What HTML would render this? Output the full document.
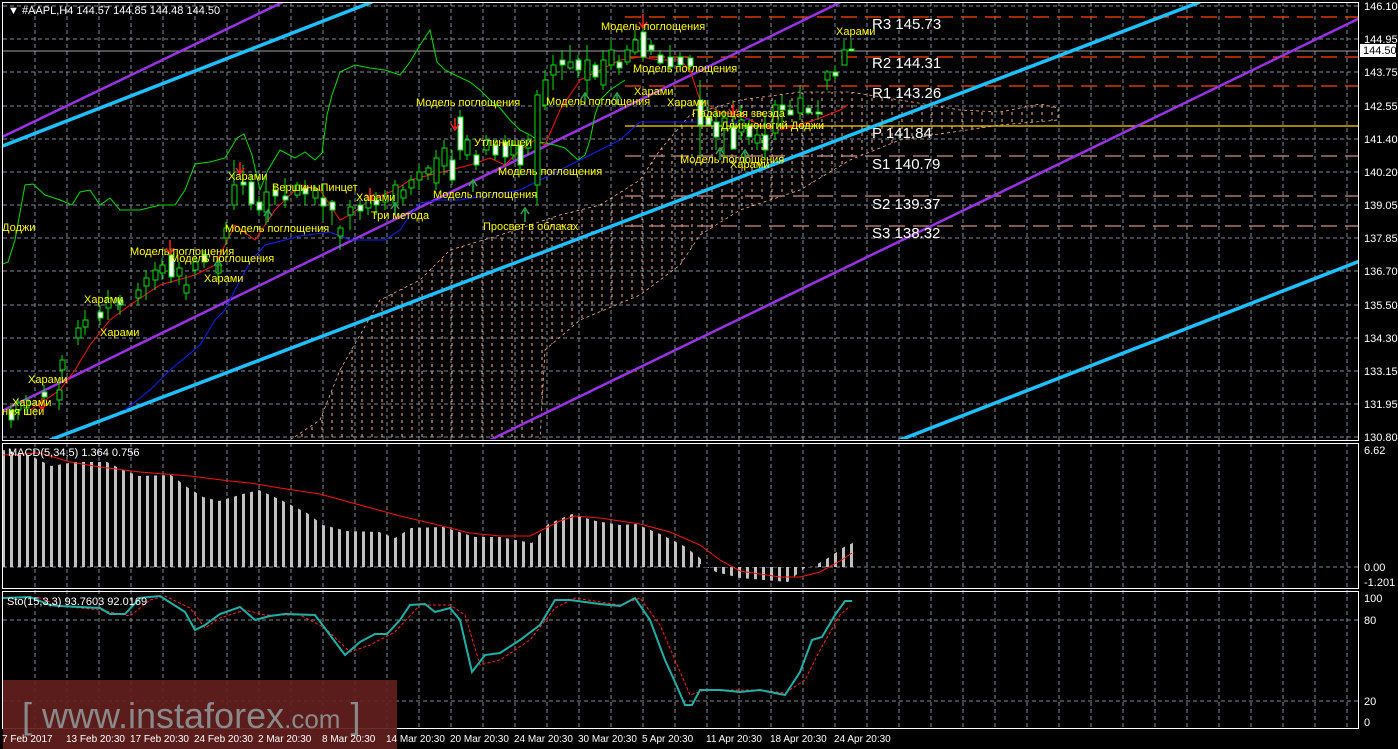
<!DOCTYPE html>
<html><head><meta charset="utf-8">
<style>
html,body{margin:0;padding:0;background:#000;width:1398px;height:749px;overflow:hidden}
svg{display:block}
text{font-family:"Liberation Sans","DejaVu Sans",sans-serif}
.ax{fill:#fff;font-size:11px}
.dt{fill:#fff;font-size:10px}
.pt{fill:#ffff00;font-size:11px;font-family:"Liberation Sans","DejaVu Sans",sans-serif}
.pv{fill:#fff;font-size:15px;font-family:"Liberation Mono","DejaVu Sans Mono",monospace}
.u{fill:#000;stroke:#00e000;stroke-width:1}
.d{fill:#fff;stroke:#00e000;stroke-width:1}
</style></head><body>
<svg width="1398" height="749" viewBox="0 0 1398 749" xmlns="http://www.w3.org/2000/svg">
<defs>
<pattern id="cl" width="10" height="7" patternUnits="userSpaceOnUse">
<line x1="2" y1="0" x2="2" y2="3" stroke="#f4b183" stroke-width="1"/>
</pattern>
<pattern id="mb" width="8" height="10" patternUnits="userSpaceOnUse" x="2">
<rect x="0" y="0" width="3" height="10" fill="#c0c0c0"/>
</pattern>
<clipPath id="mainc"><rect x="2" y="2" width="1356" height="437"/></clipPath>
</defs>
<rect width="1398" height="749" fill="#000"/>
<g stroke="#7f8a99" stroke-dasharray="4,3" stroke-width="1">
<path d="M3 6H1358M3 39H1358M3 72H1358M3 106H1358M3 139H1358M3 172H1358M3 205H1358M3 238H1358M3 271H1358M3 305H1358M3 338H1358M3 371H1358M3 404H1358M3 437H1358"/>
<path d="M35 2V728M67 2V728M99 2V728M131 2V728M163 2V728M195 2V728M227 2V728M259 2V728M291 2V728M323 2V728M355 2V728M387 2V728M419 2V728M451 2V728M483 2V728M515 2V728M547 2V728M579 2V728M611 2V728M643 2V728M675 2V728M707 2V728M739 2V728M771 2V728M803 2V728M835 2V728M867 2V728M899 2V728M931 2V728M963 2V728M995 2V728M1027 2V728M1059 2V728M1091 2V728M1123 2V728M1155 2V728M1187 2V728M1219 2V728M1251 2V728M1283 2V728M1315 2V728M1347 2V728"/>
<path d="M3 567H1358M3 620H1358M3 701H1358"/>
</g>
<g clip-path="url(#mainc)">
<polygon fill="url(#cl)" stroke="#f4b183" stroke-dasharray="3,3" stroke-width="0.8" points="290,440 320,420 340,370 380,300 420,280 450,250 500,235 560,215 600,205 640,180 660,150 690,115 740,100 800,92 850,92 900,100 960,110 1000,112 1040,104 1058,108 1058,120 1000,125 900,140 850,160 800,190 740,210 700,235 680,265 640,295 580,320 545,350 540,440"/>
<g stroke-width="1.3" stroke-dasharray="16,8">
<path d="M625 17H1358M625 57H1358M625 86H1358" stroke="#ff4500"/>
<path d="M625 156H1358M625 196H1358M625 226H1358" stroke="#d09088"/>
</g>
<path d="M625 126H1358" stroke="#ffd700" stroke-width="1.3"/>
<path d="M0 51H1358" stroke="#a0a0a0" stroke-width="1"/>
<g stroke-width="3.5" stroke="#1ec0ff" fill="none">
<line x1="0" y1="147" x2="372" y2="2"/>
<line x1="50" y1="440" x2="1200" y2="2"/>
<line x1="900" y1="440" x2="1360" y2="261"/>
</g>
<g stroke-width="2.5" stroke="#9a32e6" fill="none">
<line x1="0" y1="138" x2="283" y2="2"/>
<line x1="0" y1="412" x2="845" y2="0"/>
<line x1="490" y1="440" x2="1360" y2="18"/>
</g>
<polyline fill="none" stroke="#00e000" stroke-width="1" points="0,265 8,262 15,240 25,185 33,184 45,195 60,200 72,205 80,192 90,190 100,205 110,198 120,210 140,210 160,205 175,205 185,190 195,164 210,162 225,158 237,138 244,134 252,155 260,190 268,170 280,150 295,158 305,152 315,160 322,153 327,115 332,95 340,72 355,65 370,68 385,70 400,75 410,62 420,45 430,30 437,62 445,70 455,75 470,82 480,90 490,100 500,108 510,120 520,130 530,135 540,142 555,145 565,148 578,160 585,155 590,140 595,115 600,100 610,90 625,80"/>
<polyline fill="none" stroke="#ff1010" stroke-width="1" points="30,410 60,390 75,370 90,345 110,320 130,305 160,285 195,275 215,265 235,225 255,240 265,225 275,210 290,195 300,185 320,190 340,220 350,215 370,200 395,190 410,180 430,175 450,170 470,165 490,158 505,165 520,150 535,140 545,145 560,110 580,80 600,70 620,60 640,57 660,60 680,60 690,70 700,100 720,112 740,115 760,125 780,130 800,125 820,118 840,110 848,105"/>
<polyline fill="none" stroke="#1020ff" stroke-width="1" points="125,410 150,390 170,370 200,345 215,320 225,310 235,290 250,262 265,245 285,240 300,236 330,232 350,240 385,240 400,230 410,215 420,203 440,200 460,200 520,190 560,170 600,150 620,140 640,122 700,122 740,122 750,118"/>
<g stroke="#00e000" stroke-width="1">
<path d="M11 405V428M18 398V420M26 395V415M44 385V405M59 382V410M62 355V380M78 320V345M85 310V335M100 305V325M108 290V320M120 295V315M138 283V305M146 270V300M155 262V290M162 258V280M171 248V283M179 262V285M186 275V300M195 255V275M204 250V268M218 262V280M226 222V245M234 160V210M243 165V195M251 175V210M259 196V215M266 180V225M275 185V205M285 178V208M297 182V198M305 180V205M315 185V205M323 185V220M332 200V225M340 225V250M350 200V230M360 200V220M368 195V215M376 192V215M385 190V210M395 180V215M403 185V205M411 175V195M419 165V190M428 165V180M436 150V190M444 140V175M452 150V185M460 110V160M467 135V160M476 150V170M486 135V155M495 140V160M505 135V165M513 140V160M520 140V175M528 135V155M537 90V205M545 70V110M553 55V90M562 50V80M570 45V70M578 55V78M587 45V95M595 62V80M603 50V90M611 40V70M619 55V75M627 45V65M635 30V55M643 20V60M651 40V55M660 50V65M670 45V70M680 52V70M690 55V70M700 80V160M708 100V125M716 108V150M724 110V160M733 100V145M741 105V140M749 120V145M757 125V150M765 115V160M775 100V140M782 95V125M790 100V115M800 85V120M808 105V115M818 100V120M827 70V90M835 65V80M844 40V60M851 40V50"/>
</g>
<g>
<rect class="d" x="9" y="410" width="5" height="10"/><rect class="u" x="16" y="403" width="5" height="7"/><rect class="u" x="24" y="400" width="5" height="8"/><rect class="d" x="42" y="392" width="5" height="5"/><rect class="u" x="57" y="390" width="5" height="10"/><rect class="u" x="60" y="360" width="5" height="10"/><rect class="u" x="76" y="328" width="5" height="10"/><rect class="u" x="83" y="320" width="5" height="7"/><rect class="d" x="98" y="312" width="5" height="6"/><rect class="u" x="106" y="298" width="5" height="10"/><rect class="d" x="118" y="300" width="5" height="5"/><rect class="u" x="136" y="290" width="5" height="8"/><rect class="u" x="144" y="278" width="5" height="8"/><rect class="u" x="153" y="270" width="5" height="10"/><rect class="u" x="160" y="265" width="5" height="8"/><rect class="d" x="169" y="255" width="5" height="22"/><rect class="u" x="177" y="268" width="5" height="8"/><rect class="u" x="184" y="285" width="5" height="8"/><rect class="u" x="193" y="262" width="5" height="8"/><rect class="d" x="202" y="255" width="5" height="7"/><rect class="u" x="216" y="265" width="5" height="8"/><rect class="u" x="224" y="228" width="5" height="10"/><rect class="u" x="232" y="185" width="5" height="20"/><rect class="d" x="241" y="182" width="5" height="3"/><rect class="d" x="249" y="182" width="5" height="22"/><rect class="d" x="257" y="202" width="5" height="8"/><rect class="u" x="264" y="192" width="5" height="20"/><rect class="d" x="273" y="190" width="5" height="6"/><rect class="d" x="283" y="196" width="5" height="4"/><rect class="u" x="295" y="185" width="5" height="10"/><rect class="d" x="303" y="188" width="5" height="6"/><rect class="u" x="313" y="190" width="5" height="8"/><rect class="d" x="321" y="198" width="5" height="8"/><rect class="d" x="330" y="202" width="5" height="8"/><rect class="u" x="338" y="228" width="5" height="8"/><rect class="u" x="348" y="207" width="5" height="8"/><rect class="d" x="358" y="205" width="5" height="6"/><rect class="u" x="366" y="200" width="5" height="8"/><rect class="d" x="374" y="200" width="5" height="5"/><rect class="u" x="383" y="196" width="5" height="6"/><rect class="u" x="393" y="185" width="5" height="18"/><rect class="u" x="401" y="190" width="5" height="8"/><rect class="u" x="409" y="180" width="5" height="8"/><rect class="u" x="417" y="172" width="5" height="8"/><rect class="u" x="426" y="168" width="5" height="6"/><rect class="u" x="434" y="158" width="5" height="25"/><rect class="u" x="442" y="148" width="5" height="18"/><rect class="d" x="450" y="160" width="5" height="20"/><rect class="d" x="458" y="117" width="5" height="33"/><rect class="u" x="465" y="140" width="5" height="15"/><rect class="d" x="474" y="155" width="5" height="10"/><rect class="u" x="484" y="140" width="5" height="10"/><rect class="d" x="493" y="145" width="5" height="10"/><rect class="d" x="503" y="142" width="5" height="15"/><rect class="u" x="511" y="145" width="5" height="10"/><rect class="d" x="518" y="145" width="5" height="20"/><rect class="u" x="526" y="140" width="5" height="8"/><rect class="u" x="535" y="95" width="5" height="90"/><rect class="u" x="543" y="80" width="5" height="25"/><rect class="u" x="551" y="65" width="5" height="10"/><rect class="d" x="560" y="60" width="5" height="5"/><rect class="u" x="568" y="62" width="5" height="6"/><rect class="d" x="576" y="60" width="5" height="10"/><rect class="u" x="585" y="60" width="5" height="20"/><rect class="d" x="593" y="65" width="5" height="12"/><rect class="u" x="601" y="60" width="5" height="25"/><rect class="u" x="609" y="50" width="5" height="15"/><rect class="d" x="617" y="62" width="5" height="6"/><rect class="u" x="625" y="50" width="5" height="12"/><rect class="u" x="633" y="40" width="5" height="12"/><rect class="d" x="641" y="32" width="5" height="25"/><rect class="d" x="649" y="45" width="5" height="5"/><rect class="d" x="658" y="55" width="5" height="8"/><rect class="d" x="668" y="57" width="5" height="10"/><rect class="d" x="678" y="57" width="5" height="8"/><rect class="d" x="688" y="58" width="5" height="8"/><rect class="d" x="698" y="100" width="5" height="25"/><rect class="d" x="706" y="117" width="5" height="8"/><rect class="d" x="714" y="122" width="5" height="15"/><rect class="u" x="722" y="118" width="5" height="12"/><rect class="d" x="731" y="127" width="5" height="22"/><rect class="u" x="739" y="120" width="5" height="12"/><rect class="d" x="747" y="125" width="5" height="12"/><rect class="u" x="755" y="135" width="5" height="8"/><rect class="d" x="763" y="135" width="5" height="15"/><rect class="u" x="773" y="105" width="5" height="28"/><rect class="d" x="780" y="105" width="5" height="5"/><rect class="d" x="788" y="110" width="5" height="5"/><rect class="u" x="798" y="98" width="5" height="15"/><rect class="d" x="806" y="108" width="5" height="5"/><rect class="d" x="816" y="112" width="5" height="2"/><rect class="u" x="825" y="72" width="5" height="8"/><rect class="d" x="833" y="72" width="5" height="4"/><rect class="u" x="842" y="50" width="5" height="15"/><rect class="d" x="849" y="49" width="5" height="2"/>
</g>
<g stroke="#ff2020" stroke-width="1.5" fill="none">
<path d="M42 398V408M38 404L42 410L46 404M170 240V252M166 248L170 254L174 248M240 162V172M236 168L240 174L244 168M370 188V198M366 194L370 200L374 194M455 118V128M451 124L455 130L459 124M643 14V26M639 22L643 28L647 22M733 103V113M729 109L733 115L737 109"/>
</g>
<g stroke="#2fa84f" stroke-width="1.5" fill="none">
<path d="M268 212V222M264 216L268 210L272 216M218 262V272M214 266L218 260L222 266M118 300V310M114 304L118 298L122 304M395 205V215M391 209L395 203L399 209M473 182V192M469 186L473 180L477 186M525 210V222M521 214L525 208L529 214M585 95V105M581 99L585 93L589 99M617 95V105M613 99L617 93L621 99M720 150V160M716 154L720 148L724 154M745 152V162M741 156L745 150L749 156"/>
</g>
<g class="pt">
<text x="2" y="231">Доджи</text>
<text x="28" y="383">Харами</text>
<text x="12" y="406">Харами</text>
<text x="2" y="415">ния шеи</text>
<text x="100" y="336">Харами</text>
<text x="84" y="303">Харами</text>
<text x="130" y="255">Модель поглощения</text>
<text x="170" y="262">Модель поглощения</text>
<text x="204" y="282">Харами</text>
<text x="228" y="180">Харами</text>
<text x="225" y="232">Модель поглощения</text>
<text x="272" y="191">ВершиныПинцет</text>
<text x="356" y="201">Харами</text>
<text x="371" y="219">Три метода</text>
<text x="416" y="106">Модель поглощения</text>
<text x="433" y="198">Модель поглощения</text>
<text x="474" y="146">Утлинищеи</text>
<text x="498" y="175">Модель поглощения</text>
<text x="483" y="230">Просвет в облаках</text>
<text x="546" y="105">Модель поглощения</text>
<text x="601" y="30">Модель поглощения</text>
<text x="633" y="72">Модель поглощения</text>
<text x="634" y="95">Харами</text>
<text x="667" y="106">Харами</text>
<text x="692" y="117">Падающая звезда</text>
<text x="721" y="129">Длинноногий Доджи</text>
<text x="680" y="163">Модель поглощения</text>
<text x="730" y="168">Харами</text>
<text x="836" y="35">Харами</text>
</g>
</g>
<g class="pv">
<text x="872" y="29">R3 145.73</text>
<text x="872" y="68">R2 144.31</text>
<text x="872" y="98">R1 143.26</text>
<text x="872" y="138">P 141.84</text>
<text x="872" y="169">S1 140.79</text>
<text x="872" y="209">S2 139.37</text>
<text x="872" y="238">S3 138.32</text>
</g>
<g stroke="#fff" stroke-width="1" fill="none">
<rect x="2.5" y="2.5" width="1356" height="438"/>
<rect x="2.5" y="443.5" width="1356" height="145"/>
<rect x="2.5" y="591.5" width="1356" height="137"/>
</g>
<text x="8" y="14" class="ax">▼ #AAPL,H4  144.57 144.85 144.48 144.50</text>
<polygon fill="url(#mb)" points="3,567 3,450 19,453 35,458 51,466 75,462 107,462 123,470 139,476 171,475 187,487 203,497 219,501 243,494 259,490 283,501 307,513 323,525 347,531 379,532 395,538 411,528 443,527 475,537 500,537 532,543 548,524 572,514 596,521 620,525 636,524 660,534 684,546 700,558 707,567 707,567 716,572 740,578 788,582 796,575 806,567 812,567 828,558 844,547 855,542 855,567"/>
<rect x="700" y="564" width="110" height="3" fill="#000"/>
<polyline fill="none" stroke="#ff1010" stroke-width="1" points="3,455 40,453 70,462 100,467 140,472 190,476 230,481 250,483 280,488 320,494 360,505 400,516 430,523 470,533 500,536 530,536 560,521 575,516 600,518 640,524 670,532 700,545 720,560 740,571 780,577 800,577 820,572 840,561 852,553"/>
<text x="8" y="456" class="ax">MACD(5,34,5) 1.364 0.756</text>
<polyline fill="none" stroke="#ff2020" stroke-width="1" stroke-dasharray="3,2" points="3,598 40,598 60,606 100,610 130,616 150,600 165,596 190,608 205,628 220,618 245,610 265,615 300,615 325,628 350,652 370,645 395,632 420,605 450,605 465,615 480,665 500,660 530,640 555,608 575,598 620,605 640,598 660,625 675,660 690,695 705,690 760,690 785,693 805,680 820,650 840,615 850,606"/>
<polyline fill="none" stroke="#20b0a8" stroke-width="2" points="3,598 30,597 50,605 60,606 100,608 110,614 125,614 140,598 160,596 185,612 195,630 205,625 220,614 240,607 255,620 270,616 285,614 315,615 330,635 345,655 360,642 375,634 387,634 400,620 410,605 425,604 435,612 450,608 460,620 472,672 485,655 500,653 520,640 540,625 555,600 570,600 600,604 620,606 635,598 650,620 665,660 675,682 685,705 692,705 700,690 720,690 740,692 760,690 785,695 800,672 812,640 822,637 835,615 845,601 852,601"/>
<text x="7" y="605" class="ax">Sto(15,3,3) 93.7603 92.0169</text>
<rect x="3" y="680" width="394" height="69" fill="#621e1e" opacity="0.93"/>
<text x="22" y="728" fill="#8a8a8a" font-size="36" font-family="Liberation Sans,sans-serif">[  www.instaforex<tspan font-size="26">.com</tspan> ]</text>
<g class="dt">
<text x="2" y="742">7 Feb 2017</text>
<text x="66" y="742">13 Feb 20:30</text>
<text x="130" y="742">17 Feb 20:30</text>
<text x="194" y="742">24 Feb 20:30</text>
<text x="258" y="742">2 Mar 20:30</text>
<text x="322" y="742">8 Mar 20:30</text>
<text x="386" y="742">14 Mar 20:30</text>
<text x="450" y="742">20 Mar 20:30</text>
<text x="514" y="742">24 Mar 20:30</text>
<text x="578" y="742">30 Mar 20:30</text>
<text x="642" y="742">5 Apr 20:30</text>
<text x="706" y="742">11 Apr 20:30</text>
<text x="770" y="742">18 Apr 20:30</text>
<text x="834" y="742">24 Apr 20:30</text>
</g>
<g class="ax">
<text x="1364" y="10">146.10</text>
<text x="1364" y="43">144.95</text>
<text x="1364" y="76">143.75</text>
<text x="1364" y="110">142.55</text>
<text x="1364" y="143">141.40</text>
<text x="1364" y="176">140.20</text>
<text x="1364" y="209">139.05</text>
<text x="1364" y="242">137.85</text>
<text x="1364" y="275">136.70</text>
<text x="1364" y="309">135.50</text>
<text x="1364" y="342">134.30</text>
<text x="1364" y="375">133.15</text>
<text x="1364" y="408">131.95</text>
<text x="1364" y="441">130.80</text>
<text x="1364" y="454">6.62</text>
<text x="1364" y="571">0.00</text>
<text x="1364" y="586">-1.201</text>
<text x="1364" y="602">100</text>
<text x="1364" y="624">80</text>
<text x="1364" y="705">20</text>
<text x="1364" y="726">0</text>
</g>
<rect x="1360" y="44" width="36" height="13" fill="#fff"/>
<text x="1363" y="54" font-size="11" fill="#000">144.50</text>
</svg>
</body></html>
